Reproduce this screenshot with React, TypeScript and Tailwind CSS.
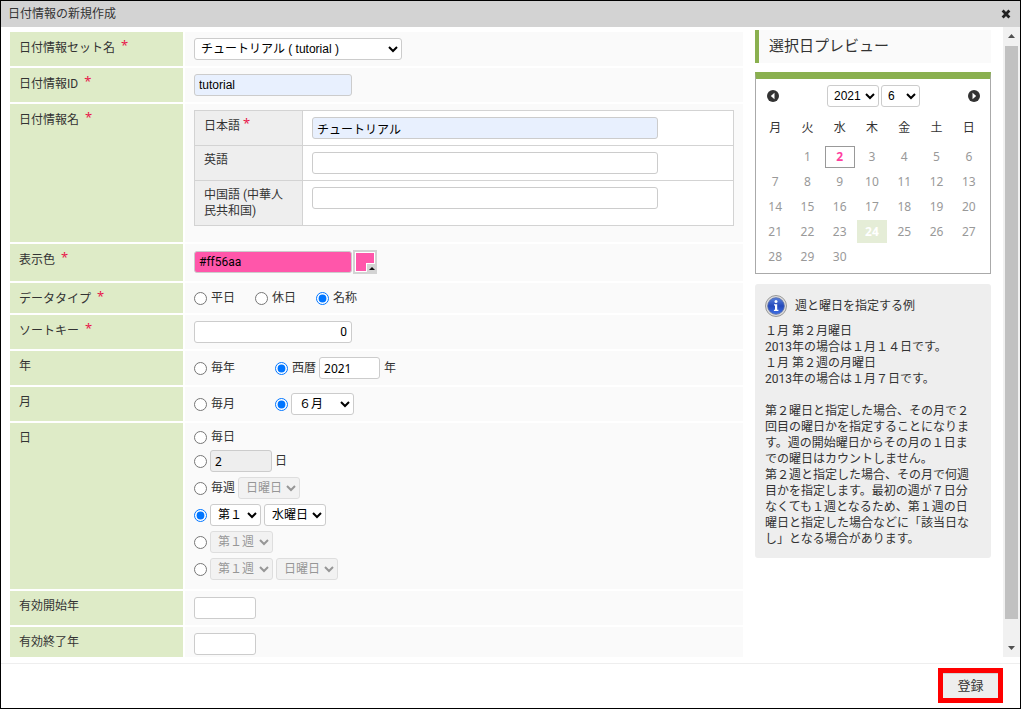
import { useState } from "react";
import type { InputHTMLAttributes, ReactNode, SelectHTMLAttributes } from "react";

const fieldBase = "h-[22px] rounded-[3px] border border-[#ccc] text-xs";

function Row({ label, required, htmlFor, className = "", children }: {
  label: string;
  required?: boolean;
  htmlFor?: string;
  className?: string;
  children: ReactNode;
}) {
  return (
    <div className="grid grid-cols-[173px_1fr] gap-[2px]">
      <div className="bg-[#deebc7] px-[9px] pt-[7px]">
        <label htmlFor={htmlFor}>{label}</label>
        {required && <Star />}
      </div>
      <div className={`bg-[#fafafa] px-[9px] py-[6px] ${className}`}>{children}</div>
    </div>
  );
}

function Star({ tight }: { tight?: boolean }) {
  return (
    <span className={`align-[2px] font-['Noto_Sans'] text-[13px] leading-3 text-[#e8174b] ${tight ? "ml-[3px]" : "ml-[6px]"}`}>*</span>
  );
}

function Text({ className = "", ...rest }: InputHTMLAttributes<HTMLInputElement>) {
  return <input type="text" className={`${fieldBase} px-1 text-black ${className}`} {...rest} />;
}

function Select({ className = "", options, ...rest }: SelectHTMLAttributes<HTMLSelectElement> & { options: string[] }) {
  return (
    <select
      className={`${fieldBase} bg-white text-black disabled:bg-[#eee] disabled:text-[#555] disabled:opacity-60 ${className}`}
      {...rest}
    >
      {options.map((o) => (
        <option key={o}>{o}</option>
      ))}
    </select>
  );
}

function Radio({ label, className = "", ...rest }: InputHTMLAttributes<HTMLInputElement> & { label?: string }) {
  return (
    <label className={`flex items-center gap-1 ${className}`}>
      <input type="radio" className="size-[13px] shrink-0" {...rest} />
      {label && <span className="leading-4">{label}</span>}
    </label>
  );
}

const week = ["月", "火", "水", "木", "金", "土", "日"];
const languages = [
  { id: "ja", label: "日本語", value: "チュートリアル", required: true },
  { id: "en", label: "英語", value: "", required: false },
  { id: "zh", label: "中国語 (中華人民共和国)", value: "", required: false },
];

function CircleArrow({ flip }: { flip?: boolean }) {
  return (
    <svg viewBox="0 0 12 12" className={`size-3 ${flip ? "rotate-180" : ""}`} aria-hidden="true">
      <circle cx="6" cy="6" r="6" fill="#333" />
      <path d="M7.5 2.8v6.4L3.8 6z" fill="#fff" />
    </svg>
  );
}

function Calendar() {
  const [year, setYear] = useState("2021");
  const [month, setMonth] = useState("6");
  const weeks = [0, 1, 2, 3, 4].map((w) => week.map((_, d) => w * 7 + d));
  return (
    <div className="border border-t-[7px] border-[#aaa] border-t-[#8ab04f] bg-white pb-1 pl-[3px] pr-[5px]">
      <div className="flex items-center justify-between pl-2 pr-[5px] pt-[6px]">
        <button type="button" aria-label="前の月"><CircleArrow /></button>
        <div className="flex gap-[2px] font-['Liberation_Sans']">
          <Select aria-label="年" className="w-[52px] pl-[2px]" options={["2021"]} value={year} onChange={(e) => setYear(e.target.value)} />
          <Select aria-label="月" className="w-[39px] pl-[2px]" options={["6"]} value={month} onChange={(e) => setMonth(e.target.value)} />
        </div>
        <button type="button" aria-label="次の月"><CircleArrow flip /></button>
      </div>
      <table className="w-full table-fixed text-center font-['Noto_Sans','Noto_Sans_CJK_JP',sans-serif] text-xs">
        <thead>
          <tr className="h-[37px]">
            {week.map((d) => (
              <th key={d} className="pt-1 font-normal text-[#333]">{d}</th>
            ))}
          </tr>
        </thead>
        <tbody className="text-[#999]">
          {weeks.map((days) => (
            <tr key={days[0]} className="h-[25px]">
              {days.map((d) => (
                <td key={d} className="p-px">
                  {d > 0 && d <= 30 && (
                    <span
                      className={
                        d === 2
                          ? "block h-[22px] border border-[#999] bg-white font-bold leading-5 text-[#ff3f9f]"
                          : d === 24
                            ? "block bg-[#e5edd7] font-bold leading-[23px] text-white"
                            : "block leading-[23px]"
                      }
                    >
                      {d}
                    </span>
                  )}
                </td>
              ))}
            </tr>
          ))}
        </tbody>
      </table>
    </div>
  );
}

function InfoIcon() {
  return (
    <svg viewBox="0 0 22 22" className="size-[22px] shrink-0" aria-hidden="true">
      <defs>
        <linearGradient id="info-blue" x1="0" y1="0" x2="0" y2="1">
          <stop offset="0" stopColor="#5b83dd" />
          <stop offset="0.5" stopColor="#2449bb" />
          <stop offset="1" stopColor="#3f70e6" />
        </linearGradient>
      </defs>
      <circle cx="11" cy="11" r="10.5" fill="#ddd" stroke="#999" />
      <circle cx="11" cy="11" r="8.3" fill="url(#info-blue)" stroke="#5267a5" strokeWidth="0.8" />
      <circle cx="11" cy="6.5" r="1.5" fill="#fff" />
      <path d="M9 9.2h3.2v5.6h1.2V16H8.9v-1.2H10v-4.3H9z" fill="#fff" />
    </svg>
  );
}

export default function App() {
  return (
    <div className="flex min-h-screen flex-col border border-black bg-white font-['Roboto','Noto_Sans_CJK_JP',sans-serif] text-xs leading-4 text-[#333]">
      <header className="flex h-[26px] items-center justify-between bg-[#d3d3d3] pl-[7px] pr-[9px]">
        <h1 className="leading-4">日付情報の新規作成</h1>
        <button type="button" aria-label="閉じる">
          <svg viewBox="0 0 10 10" className="size-[10px]" aria-hidden="true">
            <path d="M1.6 1.6l6.8 6.8M8.4 1.6l-6.8 6.8" stroke="#222" strokeWidth="2.8" />
          </svg>
        </button>
      </header>

      <div className="flex">
        <main className="flex grow gap-3 pl-[9px] pr-3">
          <form className="flex grow flex-col gap-[2px] pt-[5px]">
            <Row label="日付情報セット名" required htmlFor="set">
              <Select id="set" className="block w-[208px] pl-[2px] font-['Liberation_Sans','Noto_Sans_CJK_JP',sans-serif]" options={["チュートリアル ( tutorial )"]} />
            </Row>
            <Row label="日付情報ID" required htmlFor="id">
              <Text id="id" className="block w-[158px] bg-[#e8f0fe] font-['Liberation_Sans']" defaultValue="tutorial" />
            </Row>
            <Row label="日付情報名" required className="pb-4">
              <table className="w-full border-collapse bg-white">
                <tbody>
                  {languages.map((l) => (
                    <tr key={l.id}>
                      <th className="w-[108px] border border-[#d3d3d3] bg-[#eee] px-[9px] py-[6px] text-left align-top font-normal">
                        <label htmlFor={l.id}>{l.label}</label>
                        {l.required && <Star tight />}
                      </th>
                      <td className="border border-[#d3d3d3] px-[9px] py-[6px] align-top">
                        <Text id={l.id} className={`block w-[346px] ${l.required ? "bg-[#e8f0fe]" : "bg-white"}`} defaultValue={l.value} />
                      </td>
                    </tr>
                  ))}
                </tbody>
              </table>
            </Row>
            <Row label="表示色" required htmlFor="color" className="flex items-center gap-px pb-[7px]">
              <Text id="color" className="w-[158px] bg-[#ff56aa]" defaultValue="#ff56aa" />
              <button type="button" aria-label="色を選択" className="rounded-[2px]">
                <svg viewBox="0 0 24 24" className="block size-6" aria-hidden="true">
                  <path d="M0 0h24v24H0z" fill="#d3d3d3" />
                  <path d="M2 2h20v20H2z" fill="#fff" />
                  <path d="M3 3h18v18H3z" fill="#ff56aa" />
                  <path d="M13 13h9v9h-9z" fill="#fff" />
                  <path d="M14 14h9v8h-9z" fill="#d3d3d3" />
                  <path d="M16 20l3-3 3 3z" fill="#111" />
                </svg>
              </button>
            </Row>
            <Row label="データタイプ" required className="flex h-[30px] items-center gap-5">
              <Radio name="type" label="平日" />
              <Radio name="type" label="休日" />
              <Radio name="type" label="名称" defaultChecked />
            </Row>
            <Row label="ソートキー" required htmlFor="sort">
              <Text id="sort" className="block w-[158px] bg-white text-right" defaultValue="0" />
            </Row>
            <Row label="年" className="flex items-center">
              <Radio name="year" label="毎年" className="w-[81px]" />
              <Radio name="year" label="西暦" defaultChecked />
              <Text aria-label="西暦" className="ml-[3px] mr-1 w-[61px] bg-white font-['Noto_Sans']" defaultValue="2021" />
              年
            </Row>
            <Row label="月" className="flex items-center">
              <Radio name="month" label="毎月" className="w-[81px]" />
              <Radio name="month" aria-label="月を指定" defaultChecked />
              <Select aria-label="月" className="ml-[3px] w-[63px] pl-[3px]" options={["６月"]} />
            </Row>
            <Row label="日" className="flex flex-col gap-[5px] pb-[9px]">
              <Radio name="day" label="毎日" />
              <div className="flex items-center gap-[3px]">
                <Radio name="day" aria-label="日付を指定" />
                <Text aria-label="日" disabled className="w-[62px] bg-[#eee] font-['Noto_Sans'] text-[#555]" defaultValue="2" />
                日
              </div>
              <div className="flex items-center gap-[3px]">
                <Radio name="day" label="毎週" />
                <Select aria-label="毎週の曜日" disabled className="w-[62px] pl-[3px]" options={["日曜日"]} />
              </div>
              <div className="flex items-center gap-[3px]">
                <Radio name="day" aria-label="第何曜日" defaultChecked />
                <Select aria-label="第何" className="w-[51px] pl-[3px]" options={["第１"]} />
                <Select aria-label="曜日" className="w-[62px] pl-[3px]" options={["水曜日"]} />
              </div>
              <div className="flex items-center gap-[3px]">
                <Radio name="day" aria-label="第何週" />
                <Select aria-label="週" disabled className="w-[63px] pl-[3px]" options={["第１週"]} />
              </div>
              <div className="flex items-center gap-[3px]">
                <Radio name="day" aria-label="第何週の曜日" />
                <Select aria-label="週" disabled className="w-[63px] pl-[3px]" options={["第１週"]} />
                <Select aria-label="週の曜日" disabled className="w-[62px] pl-[3px]" options={["日曜日"]} />
              </div>
            </Row>
            <Row label="有効開始年" htmlFor="start">
              <Text id="start" className="block w-[62px] bg-white" />
            </Row>
            <Row label="有効終了年" htmlFor="end" className="pb-[2px]">
              <Text id="end" className="block w-[62px] bg-white" />
            </Row>
          </form>

          <aside className="w-[236px] shrink-0 pt-[3px]">
            <h2 className="mb-[9px] border-l-4 border-[#8ab04f] bg-[#fafafa] pl-[10px] text-[15px] leading-[33px]">選択日プレビュー</h2>
            <Calendar />
            <section className="mt-[10px] rounded-[3px] bg-[#eee] py-[11px] pl-[10px] pr-5">
              <h3 className="mb-[6px] flex items-center gap-2">
                <InfoIcon />
                週と曜日を指定する例
              </h3>
              <p>１月 第２月曜日</p>
              <p>2013年の場合は１月１４日です。</p>
              <p>１月 第２週の月曜日</p>
              <p>2013年の場合は１月７日です。</p>
              <p className="mt-4">第２曜日と指定した場合、その月で２回目の曜日かを指定することになります。週の開始曜日からその月の１日までの曜日はカウントしません。</p>
              <p>第２週と指定した場合、その月で何週目かを指定します。最初の週が７日分なくても１週となるため、第１週の日曜日と指定した場合などに「該当日なし」となる場合があります。</p>
            </section>
          </aside>
        </main>

        <div className="flex w-[17px] shrink-0 flex-col items-center bg-[#f1f1f1]" aria-hidden="true">
          <svg viewBox="0 0 17 19" className="h-[19px] w-[17px]"><path d="M5 11l3.5-4L12 11z" fill="#505050" /></svg>
          <div className="w-[13px] grow bg-[#c1c1c1]" />
          <svg viewBox="0 0 17 38" className="h-[38px] w-[17px]"><path d="M5 27l3.5 4 3.5-4z" fill="#505050" /></svg>
        </div>
      </div>

      <footer className="mt-[6px] flex grow items-start justify-end border-t border-[#eee] pr-[17px] pt-1">
        <div className="border-[5px] border-[#f00]">
          <button type="button" className="block w-[55px] border-t border-[#d3d3d3] bg-[#eee] text-[13px] leading-6">登録</button>
        </div>
      </footer>
    </div>
  );
}
